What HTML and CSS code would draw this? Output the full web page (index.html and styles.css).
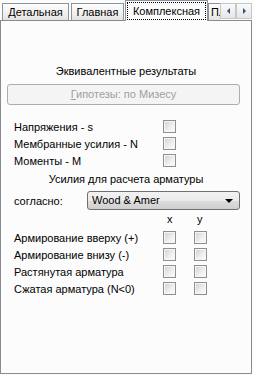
FILE: index.html
```html
<!DOCTYPE html>
<html lang="ru">
<head>
	<meta charset="UTF-8">
	<title>Комплексная</title>
	<link rel="stylesheet" href="styles.css">
</head>
<body>
	<div class="tabbar">
		<div class="tablist">
			<div class="tab tab-1">Детальная</div>
			<div class="tab tab-2">Главная</div>
			<div class="tab active"><span class="focus">Комплексная</span></div>
			<div class="tab tab-4">Пл</div>
		</div>
		<div class="scroll">
			<span class="sbtn"><i class="arr left"></i></span>
			<span class="sbtn"><i class="arr right"></i></span>
		</div>
	</div>
	<div class="panel">
		<div class="title">Эквивалентные результаты</div>
		<div class="btn"><u>Г</u>ипотезы: по Мизесу</div>

		<div class="row"><span class="label">Напряжения - s</span><span class="chk"></span></div>
		<div class="row"><span class="label">Мембранные усилия - N</span><span class="chk"></span></div>
		<div class="row"><span class="label">Моменты - M</span><span class="chk"></span></div>

		<div class="subtitle">Усилия для расчета арматуры</div>
		<div class="combo-row">
			<span class="clabel">согласно:</span>
			<div class="combo">Wood &amp; Amer<i class="drop"></i></div>
		</div>
		<div class="xy"><span class="ax">x</span><span class="ax">y</span></div>
		<div class="row"><span class="label">Армирование вверху (+)</span><span class="chk"></span><span class="chk chk2"></span></div>
		<div class="row"><span class="label">Армирование внизу (-)</span><span class="chk"></span><span class="chk chk2"></span></div>
		<div class="row"><span class="label">Растянутая арматура</span><span class="chk"></span><span class="chk chk2"></span></div>
		<div class="row"><span class="label">Сжатая арматура (N&lt;0)</span><span class="chk"></span><span class="chk chk2"></span></div>
	</div>
</body>
</html>
```

FILE: styles.css
```css
body{
	margin: 0;
	background: #fcfcfc;
	font-family: "Liberation Sans", Arial, sans-serif;
	font-size: 11px;
	color: #000;
	width: 252px;
}
.tabbar{
	display: flex;
	align-items: flex-end;
	height: 21px;
}
.tablist{
	flex: 1;
	display: flex;
	align-items: flex-end;
	height: 21px;
	padding-left: 2px;
	overflow: hidden;
}
.tab{
	flex: none;
	height: 16px;
	line-height: 16px;
	margin-bottom: 1px;
	margin-right: 2px;
	border: 1px solid #8d939a;
	border-bottom: none;
	background: linear-gradient(#fdfdfd, #f0f0ef 60%, #e3e3e0);
	text-align: center;
	white-space: nowrap;
}
.tab-1{ width: 65px; }
.tab-2{ width: 51px; }
.tab-4{ width: 30px; text-align: left; padding-left: 2px; margin-right: 0; }
.tab.active{
	position: relative;
	z-index: 1;
	width: 81px;
	height: 21px;
	margin-bottom: -1px;
	margin-right: 0;
	margin-left: -1px;
	background: #fcfcfc;
}
.focus{
	display: block;
	height: 18px;
	line-height: 18px;
	margin: 1px 0 0 1px;
	width: 79px;
	outline: 1px dotted #000;
	outline-offset: -1px;
}
.scroll{
	flex: none;
	display: flex;
	height: 16px;
	margin-bottom: 2px;
}
.sbtn{
	width: 14px;
	height: 14px;
	border: 1px solid #c7c7c7;
	background: linear-gradient(#fafafa, #e6e6e6);
	display: flex;
	align-items: center;
	justify-content: center;
}
.arr{
	width: 0;
	height: 0;
	border-top: 3px solid transparent;
	border-bottom: 3px solid transparent;
}
.arr.left{ border-right: 3px solid #33507a; }
.arr.right{ border-left: 3px solid #33507a; }

.panel{
	margin-top: -1px;
	border: 1px solid #8a8a93;
	padding-top: 43px;
	box-sizing: border-box;
	height: 354px;
}
.title{
	text-align: center;
	line-height: 15px;
}
.btn{
	margin: 5px 11px 13px 6px;
	height: 19px;
	line-height: 19px;
	border: 1px solid #adadad;
	border-radius: 3px;
	background: #f4f4f4;
	color: #a0a0a0;
	text-align: center;
}
.btn u{
	text-decoration-color: #a0a0a0;
}
.row{
	display: flex;
	align-items: center;
	height: 17px;
	padding-left: 13px;
}
.label{
	width: 149px;
	white-space: nowrap;
}
.chk{
	width: 11px;
	height: 11px;
	border: 1px solid #8e8f8f;
	background: linear-gradient(135deg, #cfcfcf, #f0f0f0 60%, #fdfdfd);
	box-shadow: inset 0 0 0 1px #f6f6f6;
}
.chk2{
	margin-left: 18px;
}
.subtitle{
	text-align: center;
	line-height: 15px;
	margin-top: 3px;
}
.combo-row{
	display: flex;
	align-items: center;
	margin-top: 4px;
	padding-left: 13px;
}
.clabel{
	width: 73px;
}
.combo{
	position: relative;
	width: 147px;
	height: 17px;
	line-height: 17px;
	padding-left: 4px;
	border: 1px solid #707070;
	border-radius: 3px;
	background: linear-gradient(#f2f2f2, #ebebeb 50%, #dddddd 51%, #cfcfcf);
}
.drop{
	position: absolute;
	right: 6px;
	top: 7px;
	width: 0;
	height: 0;
	border-left: 4px solid transparent;
	border-right: 4px solid transparent;
	border-top: 4px solid #000;
}
.xy{
	display: flex;
	line-height: 13px;
	margin-top: 3px;
	padding-left: 166px;
}
.ax{
	width: 30px;
}
.xy + .row{
	margin-top: 3px;
}
```
